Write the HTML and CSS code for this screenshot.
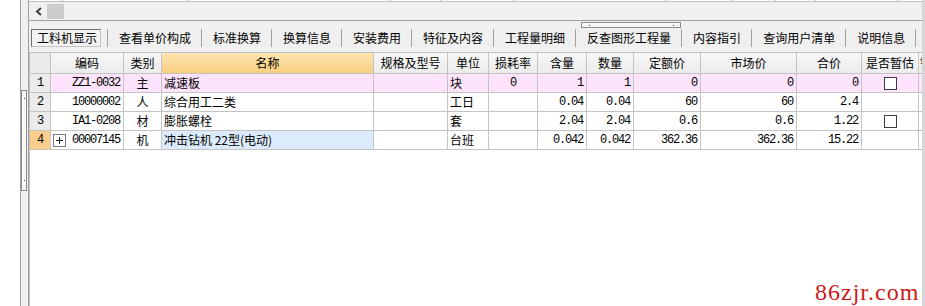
FILE: index.html
```html
<!DOCTYPE html>
<html lang="zh-CN">
<head>
    <meta charset="UTF-8">
    <title>工料机显示</title>
    <link rel="stylesheet" href="styles.css">
</head>
<body>
<div class="window">
    <div class="gutter"></div>
    <div class="splitter">
        <div class="grip-v"><i></i><i></i></div>
    </div>
    <div class="main">
        <div class="upper">
            <div class="upper-cols">
                <span style="width:34px"></span>
                <span style="width:125px"></span>
                <span style="width:203px"></span>
                <span style="width:50px"></span>
                <span style="width:73px"></span>
                <span style="width:152px"></span>
                <span style="width:67px"></span>
                <span style="width:43px"></span>
                <span style="width:40px"></span>
                <span style="width:82px"></span>
            </div>
            <div class="hscroll">
                <span class="arrow">
                    <svg width="8" height="9" viewBox="0 0 8 9"><polyline points="6,1 2,4.5 6,8" fill="none" stroke="#3c3c3c" stroke-width="2"/></svg>
                </span>
                <span class="thumb"></span>
            </div>
        </div>

        <div class="tabbar">
            <div class="grip-h"><i></i><i></i></div>
            <div class="tabs">
                <div class="tab active">工料机显示</div>
                <div class="tab">查看单价构成</div>
                <div class="tab">标准换算</div>
                <div class="tab">换算信息</div>
                <div class="tab">安装费用</div>
                <div class="tab">特征及内容</div>
                <div class="tab">工程量明细</div>
                <div class="tab">反查图形工程量</div>
                <div class="tab">内容指引</div>
                <div class="tab">查询用户清单</div>
                <div class="tab">说明信息</div>
                <div class="tab"></div>
            </div>
        </div>

        <div class="grid">
            <div class="row head">
                <div class="c w-no"></div>
                <div class="c w-code">编码</div>
                <div class="c w-cat">类别</div>
                <div class="c w-name hl">名称</div>
                <div class="c w-spec">规格及型号</div>
                <div class="c w-unit">单位</div>
                <div class="c w-loss">损耗率</div>
                <div class="c w-qty">含量</div>
                <div class="c w-amt">数量</div>
                <div class="c w-quota">定额价</div>
                <div class="c w-market">市场价</div>
                <div class="c w-total">合价</div>
                <div class="c w-est">是否暂估</div>
                <div class="c w-extra left">锁定</div>
            </div>

            <div class="row pink">
                <div class="c w-no num center">1</div>
                <div class="c w-code num right">ZZ1-0032</div>
                <div class="c w-cat center">主</div>
                <div class="c w-name">减速板</div>
                <div class="c w-spec"></div>
                <div class="c w-unit">块</div>
                <div class="c w-loss num center">0</div>
                <div class="c w-qty num right">1</div>
                <div class="c w-amt num right">1</div>
                <div class="c w-quota num right">0</div>
                <div class="c w-market num right">0</div>
                <div class="c w-total num right">0</div>
                <div class="c w-est box"><span class="chk"></span></div>
                <div class="c w-extra"></div>
            </div>

            <div class="row">
                <div class="c w-no num center">2</div>
                <div class="c w-code num right">10000002</div>
                <div class="c w-cat center">人</div>
                <div class="c w-name">综合用工二类</div>
                <div class="c w-spec"></div>
                <div class="c w-unit">工日</div>
                <div class="c w-loss"></div>
                <div class="c w-qty num right">0.04</div>
                <div class="c w-amt num right">0.04</div>
                <div class="c w-quota num right">60</div>
                <div class="c w-market num right">60</div>
                <div class="c w-total num right">2.4</div>
                <div class="c w-est"></div>
                <div class="c w-extra"></div>
            </div>

            <div class="row">
                <div class="c w-no num center">3</div>
                <div class="c w-code num right">IA1-0208</div>
                <div class="c w-cat center">材</div>
                <div class="c w-name">膨胀螺栓</div>
                <div class="c w-spec"></div>
                <div class="c w-unit">套</div>
                <div class="c w-loss"></div>
                <div class="c w-qty num right">2.04</div>
                <div class="c w-amt num right">2.04</div>
                <div class="c w-quota num right">0.6</div>
                <div class="c w-market num right">0.6</div>
                <div class="c w-total num right">1.22</div>
                <div class="c w-est box"><span class="chk"></span></div>
                <div class="c w-extra"></div>
            </div>

            <div class="row">
                <div class="c w-no num center current">4</div>
                <div class="c w-code num split">
                    <span class="expander">
                        <svg width="11" height="11" viewBox="0 0 11 11"><path d="M2 5.5h7M5.5 2v7" stroke="#222" stroke-width="1"/></svg>
                    </span>
                    <span>00007145</span>
                </div>
                <div class="c w-cat center">机</div>
                <div class="c w-name focus">冲击钻机 22型(电动)</div>
                <div class="c w-spec"></div>
                <div class="c w-unit">台班</div>
                <div class="c w-loss"></div>
                <div class="c w-qty num right">0.042</div>
                <div class="c w-amt num right">0.042</div>
                <div class="c w-quota num right">362.36</div>
                <div class="c w-market num right">362.36</div>
                <div class="c w-total num right">15.22</div>
                <div class="c w-est"></div>
                <div class="c w-extra"></div>
            </div>
        </div>
    </div>
    <div class="edge"></div>

    <div class="watermark">86zjr.com</div>
</div>
</body>
</html>
```

FILE: styles.css
```css
body {
    margin: 0;
    font-family: "Noto Sans CJK SC", sans-serif;
    font-size: 12px;
    color: #000;
    background: #fff;
}
.window {
    position: relative;
    display: flex;
    width: 925px;
    height: 306px;
    overflow: hidden;
}
.gutter {
    width: 20px;
    flex: none;
    background: #fff;
}

/* vertical splitter on the left */
.splitter {
    width: 9px;
    flex: none;
    box-sizing: border-box;
    border-left: 1px solid #a0a0a0;
    border-right: 1px solid #a0a0a0;
    background: #f0f0f0;
    padding-top: 90px;
}
.grip-v {
    width: 6px;
    height: 101px;
    box-sizing: border-box;
    border: 1px solid #8c8c8c;
    background: #f8f8f8;
    display: flex;
    flex-direction: column;
    justify-content: space-between;
    align-items: center;
    padding: 7px 0 9px;
}
.grip-v i, .grip-h i {
    display: block;
    width: 1px;
    height: 1px;
    background: #333;
}

.main {
    width: 893px;
    flex: none;
    display: flex;
    flex-direction: column;
    overflow: hidden;
}

/* bottom of the upper grid + its scrollbar */
.upper {
    border-bottom: 1px solid #a0a0a0;
    background: #f0f0f0;
}
.upper-cols {
    display: flex;
    height: 1px;
    background: #fff;
    border-bottom: 1px solid #c0c0c0;
}
.upper-cols span {
    flex: none;
    box-sizing: border-box;
    border-right: 1px solid #c0c0c0;
}
.hscroll {
    height: 18px;
    display: flex;
    align-items: center;
}
.arrow {
    width: 12px;
    margin-left: 6px;
    display: flex;
    align-items: center;
}
.thumb {
    width: 17px;
    height: 15px;
    background: #cdcdcd;
}

/* tab strip */
.tabbar {
    height: 31px;
    box-sizing: border-box;
    padding-top: 1px;
    background: #f0f0f0;
}
.grip-h {
    width: 100px;
    height: 6px;
    margin-left: 552px;
    box-sizing: border-box;
    border: 1px solid #8c8c8c;
    background: #f8f8f8;
    display: flex;
    justify-content: space-between;
    align-items: center;
    padding: 0 6px 0 7px;
}
.tabs {
    display: flex;
    margin-top: 1px;
    height: 19px;
}
.tab {
    height: 18px;
    line-height: 18px;
    padding: 0 10px 0 11px;
    border-left: 1px solid #a0a0a0;
    white-space: nowrap;
}
.tab.active {
    box-sizing: border-box;
    width: 70px;
    line-height: 16px;
    margin: 0 6px 0 2px;
    padding: 0 3px 0 5px;
    border: 1px solid;
    border-color: #6e6e6e #c4c4c4 #c4c4c4 #6e6e6e;
    background: #f3f3f3;
}

/* data grid */
.grid {
    flex: 1;
    background: #fff;
    border-top: 1px solid #c0c0c0;
    border-left: 1px solid #c0c0c0;
    overflow: hidden;
}
.row {
    display: flex;
    height: 19px;
}
.c {
    flex: none;
    box-sizing: border-box;
    height: 100%;
    border-right: 1px solid #c4c4c4;
    border-bottom: 1px solid #c4c4c4;
    line-height: 18px;
    padding: 0 2px;
    white-space: nowrap;
    overflow: hidden;
}
.head {
    height: 21px;
}
.head .c {
    line-height: 20px;
    text-align: center;
    background: linear-gradient(#f7f7f7, #ececec);
}
.head .c.hl {
    background: linear-gradient(#fde6b2, #f9cd7e);
}
.head .c.left {
    text-align: left;
    padding-left: 1px;
}

.w-no { width: 21px; }
.w-code { width: 73px; }
.w-cat { width: 38px; }
.w-name { width: 212px; }
.w-spec { width: 74px; }
.w-unit { width: 41px; }
.w-loss { width: 49px; }
.w-qty { width: 49px; }
.w-amt { width: 47px; }
.w-quota { width: 67px; }
.w-market { width: 96px; }
.w-total { width: 65px; }
.w-est { width: 57px; }
.w-extra { width: 60px; }

.num {
    font-family: "Liberation Mono", monospace;
    letter-spacing: -1.2px;
}
.right {
    text-align: right;
    padding-right: 3px;
}
.center {
    text-align: center;
}
.row .w-no {
    background: #ebebeb;
    padding: 0;
}
.row .w-no.current {
    background: #fcd08c;
}
.pink .c {
    background: #fde3fc;
}
.pink .w-no {
    background: #ebebeb;
}
.focus {
    background: #dcebfb;
}

.box {
    display: flex;
    align-items: center;
    justify-content: center;
}
.chk {
    width: 13px;
    height: 13px;
    box-sizing: border-box;
    border: 1px solid #3c3c3c;
    background: #fff;
}
.split {
    display: flex;
    align-items: center;
    justify-content: space-between;
    padding: 0 3px 0 2px;
}
.expander {
    width: 13px;
    height: 13px;
    box-sizing: border-box;
    border: 1px solid #7a7a7a;
    background: #fff;
    display: flex;
}

.edge {
    width: 3px;
    flex: none;
    background: #d6d6d6;
}

.watermark {
    position: absolute;
    left: 815px;
    top: 280px;
    font-family: "Liberation Serif", serif;
    font-size: 24px;
    letter-spacing: 1px;
    line-height: 24px;
    color: #cc1a1a;
}
```
